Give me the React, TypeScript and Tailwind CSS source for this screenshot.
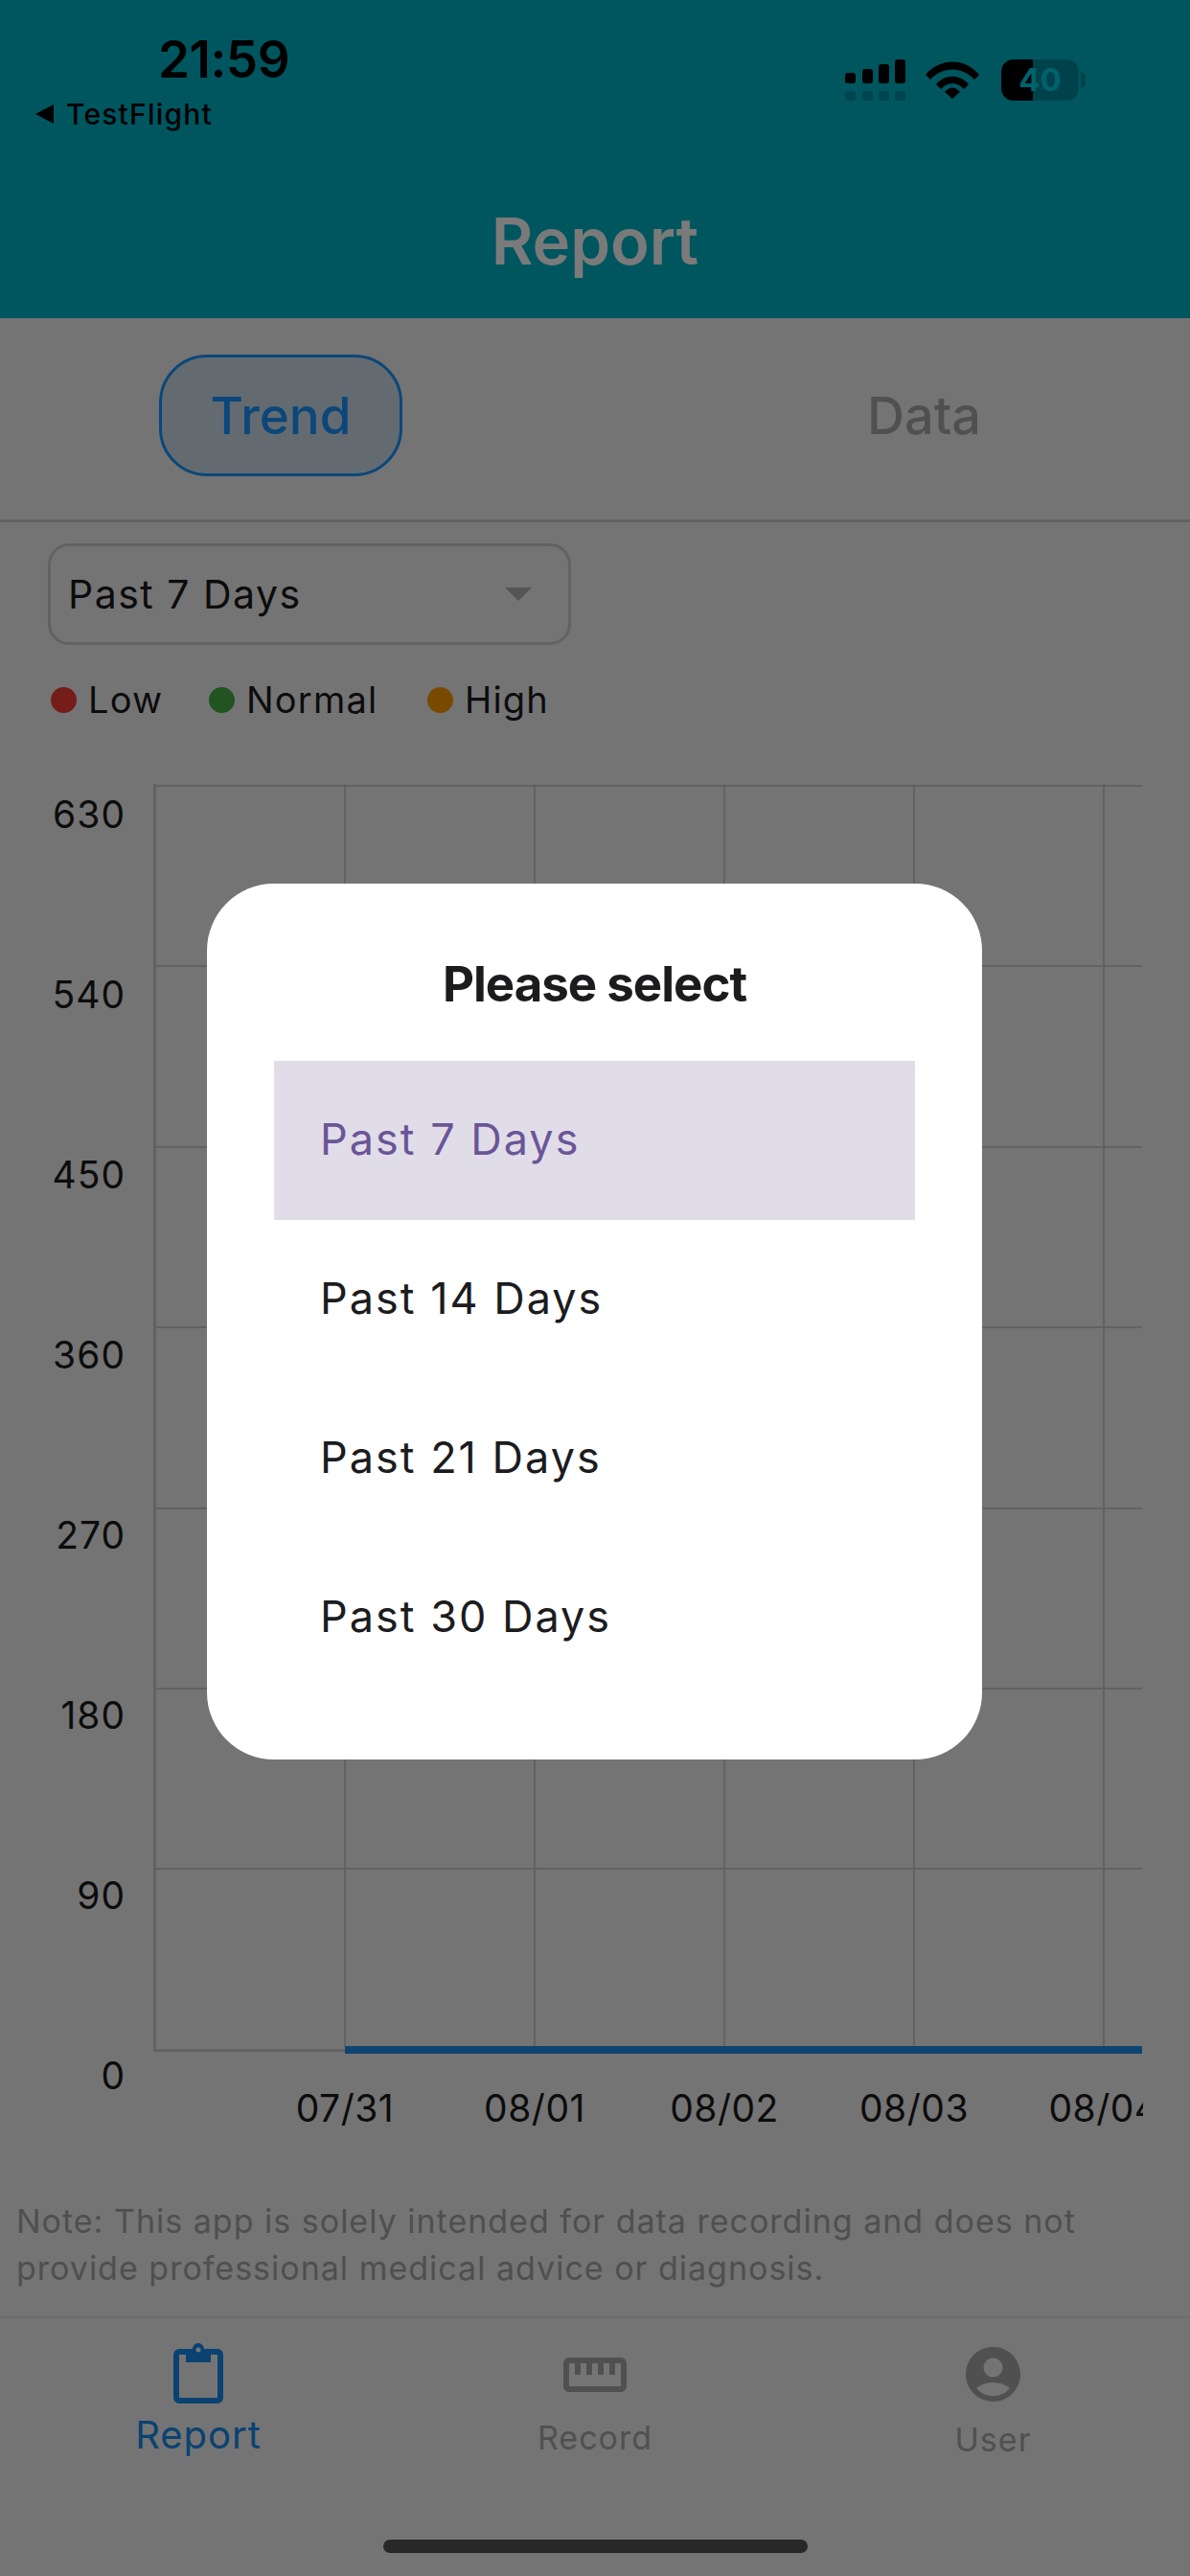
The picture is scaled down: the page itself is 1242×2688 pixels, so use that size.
const yTicks = ['630', '540', '450', '360', '270', '180', '90', '0'];
const xTicks = ['07/31', '08/01', '08/02', '08/03', '08/04'];
const ranges = ['Past 7 Days', 'Past 14 Days', 'Past 21 Days', 'Past 30 Days'];
const legend = [
  {label: 'Low', dot: 'bg-[#741d19]', cls: 'w-[165px]'},
  {label: 'Normal', dot: 'bg-[#225422]', cls: 'w-[228px]'},
  {label: 'High', dot: 'bg-[#784a00]', cls: 'w-[130px]'},
];

function StatusIcons() {
  return (
    <div className="mt-[62px] mr-[109px] flex items-start">
      <svg width="63" height="43" viewBox="0 0 63 43" className="text-black">
        <rect x="0" y="14" width="11" height="11" rx="3" fill="currentColor" />
        <rect x="18" y="10" width="11" height="15" rx="3" fill="currentColor" />
        <rect x="35" y="5" width="11" height="20" rx="3" fill="currentColor" />
        <rect x="52" y="0" width="11" height="25" rx="3" fill="currentColor" />
        <rect x="0" y="33" width="11" height="10" rx="3" fill="#00444d" />
        <rect x="18" y="33" width="11" height="10" rx="3" fill="#00444d" />
        <rect x="35" y="33" width="11" height="10" rx="3" fill="#00444d" />
        <rect x="52" y="33" width="11" height="10" rx="3" fill="#00444d" />
      </svg>
      <svg width="56" height="40" viewBox="0 0 56 40" className="ml-[21px] mt-[1px]">
        <path d="M0 15C15 -3 41 -3 56 15L51 20C38 6 18 6 5 20Z" fill="#000" />
        <path d="M11 25C20 14 36 14 45 25L40 30C33 22 23 22 16 30Z" fill="#000" />
        <path d="M20 33C25 27 31 27 36 33L28 40Z" fill="#000" />
      </svg>
      <div className="relative ml-[23px] flex h-[43px] w-[81px] items-center justify-center overflow-hidden rounded-[13px] bg-[#00424b]">
        <div className="absolute inset-y-0 left-0 w-[33px] bg-black" />
        <span className="relative text-[33px] leading-none font-bold text-[#00626d]">40</span>
      </div>
      <div className="mt-[14px] ml-[2px] h-[15px] w-[5px] rounded-r-[4px] bg-[#00424b]" />
    </div>
  );
}

function ClipboardIcon() {
  return (
    <svg width="52" height="63" viewBox="0 0 52 63" fill="none">
      <rect x="3" y="9" width="46" height="51" rx="3" stroke="#0a4272" strokeWidth="6" />
      <path d="M13 7H20C20 2 23 0 26 0C29 0 32 2 32 7H39V20H13Z" fill="#0a4272" />
      <circle cx="26" cy="7" r="2.5" fill="#747474" />
    </svg>
  );
}

function RulerIcon() {
  return (
    <svg width="66" height="66" viewBox="1 1 22 22" fill="#505050">
      <path d="M21 6H3c-1.1 0-2 .9-2 2v8c0 1.1.9 2 2 2h18c1.1 0 2-.9 2-2V8c0-1.1-.9-2-2-2zm0 10H3V8h2v4h2V8h2v4h2V8h2v4h2V8h2v4h2V8h2v8z" />
    </svg>
  );
}

function UserIcon() {
  return (
    <svg width="57" height="57" viewBox="2 2 20 20" fill="#505050">
      <path d="M12 2C6.48 2 2 6.48 2 12s4.48 10 10 10 10-4.48 10-10S17.52 2 12 2zm0 4c1.93 0 3.5 1.57 3.5 3.5S13.93 13 12 13s-3.5-1.57-3.5-3.5S10.07 6 12 6zm0 14c-2.03 0-4.43-.82-6.14-2.88C7.55 15.8 9.68 15 12 15s4.45.8 6.14 2.12C16.43 19.18 14.03 20 12 20z" />
    </svg>
  );
}

function Plot() {
  return (
    <svg width="1032" height="1326" viewBox="0 0 1032 1326" className="block">
      {[1, 189, 378, 566, 755, 943, 1131].map((y) => (
        <rect key={y} x="0" y={y} width="1032" height="2" fill="#626262" />
      ))}
      {[200, 398, 596, 794, 992].map((x) => (
        <rect key={x} x={x - 1} y="0" width="2" height="1318" fill="#626262" />
      ))}
      <rect x="0" y="0" width="3" height="1323" fill="#626262" />
      <rect x="0" y="1320" width="200" height="3" fill="#626262" />
      <rect x="200" y="1317" width="832" height="8" fill="#0e4470" />
    </svg>
  );
}

export default function App() {
  return (
    <div className="relative flex h-[2688px] w-[1242px] flex-col overflow-hidden bg-[#747474] font-['Inter',sans-serif] text-[#0c0c0c]">
      <header className="h-[332px] shrink-0 bg-[#00565f]">
        <div className="flex justify-between">
          <div>
            <div className="mt-[34px] ml-[165px] text-[53px] leading-[56px] font-semibold tracking-[-0.5px] text-black">21:59</div>
            <div className="mt-[11px] ml-[37px] flex items-center text-black">
              <span className="h-0 w-0 border-y-[10px] border-r-[19px] border-y-transparent border-r-black" />
              <span className="ml-[13px] text-[30px] leading-[36px] font-medium tracking-[1.2px]">TestFlight</span>
            </div>
          </div>
          <StatusIcons />
        </div>
        <div className="mt-[77px] text-center text-[67px] leading-[76px] font-semibold text-[#7a7a7a]">Report</div>
      </header>

      <div className="flex h-[213px] shrink-0 items-start border-b-[3px] border-[#626262] pt-[38px]">
        <div className="ml-[166px] flex h-[127px] w-[254px] items-center justify-center rounded-[50px] border-[3px] border-[#0b477a] bg-[#646b70] pt-[3px] text-[53px] font-medium text-[#0b477a]">
          Trend
        </div>
        <div className="mt-[32px] mr-[218px] ml-auto text-[54px] leading-[64px] font-medium text-[#505050]">Data</div>
      </div>

      <div className="mt-[22px] ml-[50px] flex h-[106px] w-[546px] shrink-0 items-center justify-between rounded-[22px] border-[3px] border-[#626262] pr-[38px] pl-[18px]">
        <span className="pt-[2px] text-[41px] tracking-[1.5px]">Past 7 Days</span>
        <span className="h-0 w-0 border-x-[14px] border-t-[14px] border-x-transparent border-t-[#555555]" />
      </div>

      <div className="mt-[33px] ml-[53px] flex h-[48px] shrink-0 items-center">
        {legend.map((item) => (
          <div key={item.label} className={`flex items-center ${item.cls}`}>
            <span className={`h-[27px] w-[27px] rounded-full ${item.dot}`} />
            <span className="ml-[12px] text-[38px] tracking-[1.2px]">{item.label}</span>
          </div>
        ))}
      </div>

      <div className="mt-[64px] flex h-[1410px] shrink-0">
        <div className="w-[131px] shrink-0 pt-[2px] text-right text-[39px] leading-[60px] tracking-[1px]">
          {yTicks.map((tick) => (
            <div key={tick} className="h-[188px]">{tick}</div>
          ))}
        </div>
        <div className="ml-[29px] w-[1033px] shrink-0 overflow-hidden">
          <Plot />
          <div className="mt-[26px] ml-[101px] flex">
            {xTicks.map((tick) => (
              <div key={tick} className="w-[198px] shrink-0 text-center text-[39px] leading-[60px] tracking-[0.5px]">{tick}</div>
            ))}
          </div>
        </div>
      </div>

      <p className="mt-[65px] ml-[17px] w-[1190px] shrink-0 text-[34px] leading-[49px] tracking-[1px] text-[#4f4f4f]">
        Note: This app is solely intended for data recording and does not provide professional medical advice or diagnosis.
      </p>

      <nav className="mt-[26px] grid h-[190px] shrink-0 grid-cols-3 border-t-2 border-[#6c6c6c]">
        <div className="flex flex-col items-center pt-[26px] text-[40px] tracking-[1px] text-[#0a4272]">
          <ClipboardIcon />
          <span className="mt-[9px] leading-[48px]">Report</span>
        </div>
        <div className="flex flex-col items-center pt-[26px] text-[34px] tracking-[1px] text-[#505050]">
          <RulerIcon />
          <span className="mt-[10px] leading-[46px]">Record</span>
        </div>
        <div className="flex flex-col items-center pt-[30px] pl-[3px] text-[34px] tracking-[1px] text-[#505050]">
          <UserIcon />
          <span className="mt-[17px] leading-[46px]">User</span>
        </div>
      </nav>

      <div className="absolute bottom-[24px] left-[400px] h-[14px] w-[443px] rounded-full bg-[#282828]" />

      <div className="absolute top-[922px] left-[216px] flex h-[914px] w-[809px] flex-col rounded-[70px] bg-white">
        <div className="mt-[75px] text-center text-[51px] leading-[60px] font-bold tracking-[-1px] text-[#1c1c1e]">Please select</div>
        <ul className="mx-[70px] mt-[50px]">
          {ranges.map((range, i) => (
            <li
              key={range}
              className={`flex h-[166px] items-center pb-[2px] pl-[48px] text-[45px] tracking-[2px] ${i === 0 ? 'bg-[#e0dde9] text-[#6b5597]' : 'text-[#1c1c1e]'}`}
            >
              {range}
            </li>
          ))}
        </ul>
      </div>
    </div>
  );
}
